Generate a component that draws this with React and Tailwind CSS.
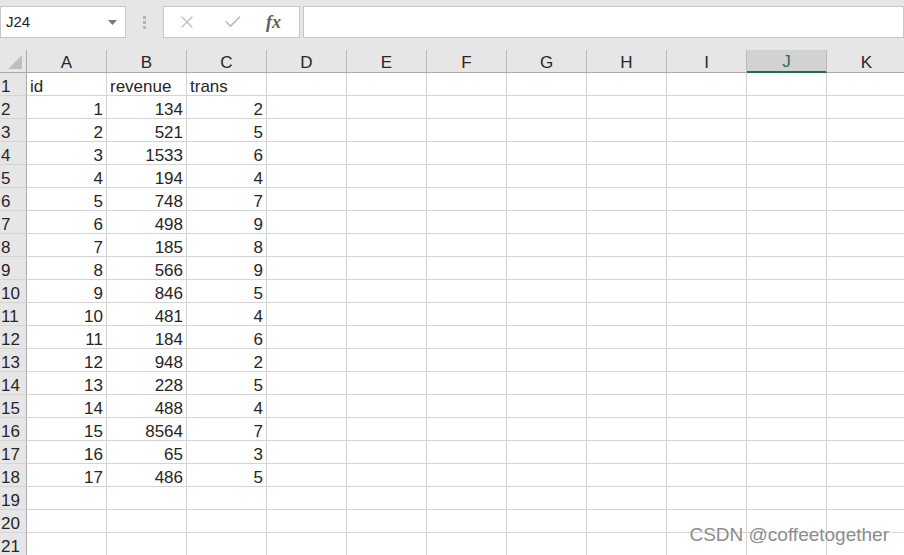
import { Fragment } from 'react';
import { X, Check } from 'lucide-react';

const cols = ['A', 'B', 'C', 'D', 'E', 'F', 'G', 'H', 'I', 'J', 'K'];

const data = [
    ['id', 'revenue', 'trans'],
    [1, 134, 2],
    [2, 521, 5],
    [3, 1533, 6],
    [4, 194, 4],
    [5, 748, 7],
    [6, 498, 9],
    [7, 185, 8],
    [8, 566, 9],
    [9, 846, 5],
    [10, 481, 4],
    [11, 184, 6],
    [12, 948, 2],
    [13, 228, 5],
    [14, 488, 4],
    [15, 8564, 7],
    [16, 65, 3],
    [17, 486, 5],
    [],
    [],
    [],
];

const Toolbar = () => (
    <div className="h-[50px] flex items-start pt-[6px]">
        <div className="w-[126px] h-[32px] bg-white border border-[#c6c6c6] flex items-center justify-between pl-[5px] pr-[8px]">
            <span className="text-[15px] text-[#222]">J24</span>
            <svg width="9" height="5" viewBox="0 0 9 5">
                <path d="M0 0 L9 0 L4.5 5 Z" fill="#7a7a7a" />
            </svg>
        </div>
        <div className="w-[37px] h-[32px] flex flex-col items-center justify-center gap-[2px]">
            <div className="w-[3px] h-[3px] bg-[#b5b5b5]" />
            <div className="w-[3px] h-[3px] bg-[#b5b5b5]" />
            <div className="w-[3px] h-[3px] bg-[#b5b5b5]" />
        </div>
        <div className="w-[137px] h-[32px] bg-white border border-[#c6c6c6] flex items-center">
            <X className="w-[20px] h-[20px] ml-[13px] text-[#bdbdbd]" strokeWidth={1.5} />
            <Check className="w-[20px] h-[20px] ml-[26px] text-[#bdbdbd]" strokeWidth={2} />
            <span className="ml-[23px] text-[18px] italic font-bold text-[#5e5e5e] font-['Liberation_Serif',serif]">fx</span>
        </div>
        <div className="ml-[3px] flex-1 h-[32px] bg-white border border-[#c6c6c6]" />
    </div>
);

const App = () => {
    return (
        <div className="relative w-[904px] h-[555px] overflow-hidden bg-[#e6e6e6] font-['Liberation_Sans',sans-serif] text-[#262626]">
            <Toolbar />
            <div className="grid grid-cols-[27px_repeat(11,80px)] w-max">
                <div className="h-[23px] border-r border-b border-[#ababab] bg-[#e6e6e6] relative">
                    <svg className="absolute right-[4px] bottom-[3px]" width="14" height="14" viewBox="0 0 14 14">
                        <path d="M14 0 L14 14 L0 14 Z" fill="#bfbfbf" />
                    </svg>
                </div>
                {cols.map((c) => (
                    <div
                        key={c}
                        className={
                            c === 'J'
                                ? 'h-[23px] bg-[#d2d2d2] border-r border-[#bcbcbc] border-b-2 border-b-[#217346] flex items-center justify-center pt-[3px] text-[17px] text-[#217346]'
                                : 'h-[23px] border-r border-b border-[#bcbcbc] border-b-[#ababab] flex items-center justify-center pt-[3px] text-[17px]'
                        }
                    >
                        {c}
                    </div>
                ))}
                {data.map((row, r) => (
                    <Fragment key={r}>
                        <div className="h-[23px] border-r border-b border-r-[#ababab] border-b-[#d4d4d4] bg-[#e6e6e6] flex items-center pt-[5px] pl-[1px] text-[17px]">
                            {r + 1}
                        </div>
                        {cols.map((c, i) => {
                            const v = row[i];
                            const num = typeof v === 'number';
                            return (
                                <div
                                    key={c}
                                    className={`h-[23px] bg-white border-r border-b border-[#d4d4d4] flex items-center pt-[5px] text-[17px] px-[3px] ${num ? 'justify-end' : 'justify-start'}`}
                                >
                                    {v}
                                </div>
                            );
                        })}
                    </Fragment>
                ))}
            </div>
            <div className="absolute right-[15px] bottom-[6px] text-[19px] text-[#8c8c8c] [text-shadow:0_0_2px_#fff]">
                CSDN @coffeetogether
            </div>
        </div>
    );
};

export default App;
